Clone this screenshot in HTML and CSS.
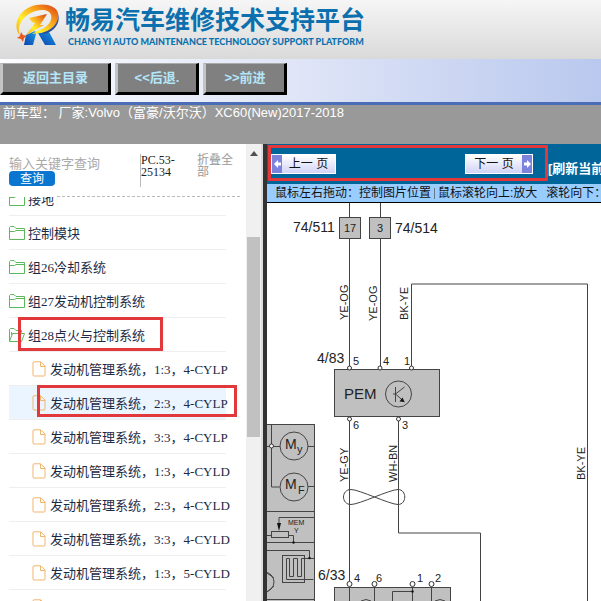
FILE: index.html
```html
<!DOCTYPE html>
<html lang="zh-CN">
<head>
    <meta charset="UTF-8">
    <meta name="viewport" content="width=device-width, initial-scale=1.0">
    <title>畅易汽车维修技术支持平台</title>
    <link rel="stylesheet" href="styles.css">
</head>
<body>
    <svg class="sprite" aria-hidden="true">
        <symbol id="folder" viewBox="0 0 16 14"><path d="M.5 13.500V1.500l1-1H5L7 2.500h8.500v11zM.5 5.500h5l1.500-1h8.500"/></symbol>
        <symbol id="folder-open" viewBox="0 0 16 14"><path d="M.5 13V1.500l1-1H5L7 2.500h5.500v2M.5 13.500l3-8h12l-3 8zM2.500 4v3"/></symbol>
        <symbol id="file" viewBox="0 0 14 16"><path d="M2 .8h6.500L13 5v9q0 1-1 1H2q-1 0-1-1V2Q1 .8 2 .8zM8.500 1v4.500H13"/></symbol>
    </svg>

    <header class="header">
        <svg class="logo" width="46" height="42" viewBox="0 0 46 42" aria-hidden="true">
            <defs>
                <linearGradient id="flame" x1="0" y1="1" x2="1" y2="0">
                    <stop offset="0" stop-color="#f6a318"/>
                    <stop offset="0.35" stop-color="#fff02c"/>
                    <stop offset="0.65" stop-color="#f9a31b"/>
                    <stop offset="1" stop-color="#d93a16"/>
                </linearGradient>
                <linearGradient id="leg" x1="0" y1="1" x2="1" y2="0">
                    <stop offset="0" stop-color="#0a3fae"/>
                    <stop offset="1" stop-color="#1ba0e6"/>
                </linearGradient>
            </defs>
            <path d="M12 31l9-4 1 3-3 11H10z" fill="url(#leg)"/>
            <path d="M24 29l10-3 8 15H31z" fill="url(#leg)"/>
            <path d="M44 10c3 9-4 18-14 20l-3-1c9-4 15-10 17-19z" fill="#2b4f9c"/>
            <path d="M6 32C-2 22 4 8 16 3 28-2 42 1 44 9c2 10-7 18-17 20l-9 1 5-3c9-3 16-9 14-16C35 4 23 5 15 10 6 16 3 24 6 32z" fill="url(#flame)"/>
            <path d="M15 14l18-4-7 11 4 0-18 10 9-12-3-1z" fill="url(#flame)"/>
            <path d="M7 28l2 3 4 1-3 2-1 4-2-3-4-1 3-2z" fill="#ea5a1c"/>
        </svg>
        <div class="brand">
            <h1>畅易汽车维修技术支持平台</h1>
            <p>CHANG YI AUTO MAINTENANCE TECHNOLOGY SUPPORT PLATFORM</p>
        </div>
    </header>

    <nav class="toolbar">
        <button class="tool-btn tool-home" type="button">返回主目录</button>
        <button class="tool-btn" type="button">&lt;&lt;后退.</button>
        <button class="tool-btn" type="button">&gt;&gt;前进</button>
    </nav>

    <div class="car-info">前车型： 厂家:Volvo（富豪/沃尔沃）XC60(New)2017-2018</div>

    <div class="main">
        <aside class="sidebar">
            <div class="side-body">
                <div class="side-top">
                    <form class="search">
                        <input type="text" placeholder="输入关键字查询" aria-label="输入关键字查询">
                        <button type="button">查询</button>
                    </form>
                    <div class="doc-code">PC.53-25134</div>
                    <a class="collapse" href="#">折叠全部</a>
                </div>
                <hr class="divider">
                <div class="tree-view">
                    <ul class="tree">
                        <li><a href="#"><svg class="folder"><use href="#folder"/></svg>接地</a></li>
                        <li><a href="#"><svg class="folder"><use href="#folder"/></svg>控制模块</a></li>
                        <li><a href="#"><svg class="folder"><use href="#folder"/></svg>组26冷却系统</a></li>
                        <li><a href="#"><svg class="folder"><use href="#folder"/></svg>组27发动机控制系统</a></li>
                        <li><a href="#"><svg class="folder"><use href="#folder-open"/></svg>组28点火与控制系统</a><span class="mark mark-group"></span></li>
                        <li class="leaf"><a href="#"><svg class="file"><use href="#file"/></svg>发动机管理系统，1:3，4-CYLP</a></li>
                        <li class="leaf active"><a href="#"><svg class="file"><use href="#file"/></svg>发动机管理系统，2:3，4-CYLP</a><span class="mark mark-item"></span></li>
                        <li class="leaf"><a href="#"><svg class="file"><use href="#file"/></svg>发动机管理系统，3:3，4-CYLP</a></li>
                        <li class="leaf"><a href="#"><svg class="file"><use href="#file"/></svg>发动机管理系统，1:3，4-CYLD</a></li>
                        <li class="leaf"><a href="#"><svg class="file"><use href="#file"/></svg>发动机管理系统，2:3，4-CYLD</a></li>
                        <li class="leaf"><a href="#"><svg class="file"><use href="#file"/></svg>发动机管理系统，3:3，4-CYLD</a></li>
                        <li class="leaf"><a href="#"><svg class="file"><use href="#file"/></svg>发动机管理系统，1:3，5-CYLD</a></li>
                        <li class="leaf"><a href="#"><svg class="file"><use href="#file"/></svg></a></li>
                    </ul>
                </div>
            </div>
            <div class="scrollbar">
                <svg width="8" height="5" viewBox="0 0 8 5"><path d="M0 5l4-5 4 5z" fill="#505050"/></svg>
                <div class="thumb"></div>
            </div>
        </aside>

        <section class="viewer">
            <div class="pager">
                <button class="page-btn page-prev" type="button"><span class="arrow"><svg width="7" height="8" viewBox="0 0 7 8"><path d="M0 4l4-4v2.500h3v3H4V8z" fill="#fff"/></svg></span><span class="page-text">上一 页</span></button>
                <button class="page-btn" type="button"><span class="page-text">下一 页</span><span class="arrow"><svg width="7" height="8" viewBox="0 0 7 8"><path d="M7 4L3 0v2.500H0v3h3V8z" fill="#fff"/></svg></span></button>
                <a class="refresh" href="#">[刷新当前</a>
                <span class="mark mark-pager"></span>
            </div>
            <div class="tips"><span>鼠标左右拖动：控制图片位置</span><i></i><span>鼠标滚轮向上:放大</span><span class="tip-down">滚轮向下：</span></div>

            <!-- wiring diagram -->
            <div class="canvas">
                <svg class="diagram" width="334" height="398" viewBox="267 203 334 398">
                    <g class="fill">
                        <rect x="339.500" y="217.500" width="21" height="21"/>
                        <rect x="369.500" y="217.500" width="21" height="21"/>
                        <rect x="334.500" y="369.500" width="105" height="47"/>
                        <rect x="260.500" y="424.500" width="54" height="180"/>
                        <rect x="334.500" y="587.500" width="116" height="20"/>
                    </g>
                    <g class="wire">
                        <path d="M349.500 203v14M380.500 203v14M349.500 239v128M380.500 239v128M411.500 366v-82h176v320"/>
                        <path d="M349.500 421v160M398.500 421v112h82v70"/>
                        <path d="M351 504.500c-10 0-10-15 0-15 8 0 39 15 47 15 9 0 9-15 0-15-8 0-39 15-47 15z"/>
                        <path d="M267 446.500h13M308 446.500h6M271.500 425v62h8M308 486.500h6"/>
                        <path d="M261 511.500h53M314 517.500h-35v8M267 535.500h4M289 535.500h4.500v7M261 542.500h53M261 550.500h48.500v8"/>
                        <rect x="271.500" y="531.500" width="17" height="6"/>
                        <rect x="282.500" y="555.500" width="22" height="27"/>
                        <path d="M314 558.500h-12.500v18h-4v-18h-4v18h-4v-18h-3v21h27M261 599.500h53"/>
                        <circle cx="294" cy="446" r="14"/>
                        <circle cx="294" cy="487" r="14"/>
                        <circle cx="264" cy="582" r="10"/>
                        <path d="M267 573l7 5M267 592l7-6"/>
                        <circle cx="398.500" cy="394" r="13"/>
                        <path d="M395.500 387v15M395.500 394l9-7M393 394h3M395.500 394l9 8"/>
                        <path d="M349.500 587v14M374.500 587v14M412.500 587v14M431.500 587v14M412 591.500h-19.500V601"/>
                        <path d="M361 601q5-3 10 0M435 601q5-3 10 0"/>
                    </g>
                    <g class="solid">
                        <path d="M277 523h4l-2 8zM404.500 402l-5-.5 3-4z"/>
                        <circle cx="309.500" cy="558" r="1.200"/>
                        <circle cx="293.500" cy="542.500" r="1.200"/>
                        <circle cx="412.500" cy="591.500" r="1.200"/>
                    </g>
                    <g class="pin">
                        <circle cx="349.500" cy="368" r="2"/>
                        <circle cx="380" cy="368" r="2"/>
                        <circle cx="411.500" cy="368" r="2"/>
                        <circle cx="349.500" cy="419" r="2"/>
                        <circle cx="398.500" cy="419" r="2"/>
                        <circle cx="271.500" cy="446" r="2"/>
                        <circle cx="349.500" cy="584" r="2.500"/>
                        <circle cx="374.500" cy="584" r="2.500"/>
                        <circle cx="412.500" cy="584" r="2.500"/>
                        <circle cx="431.500" cy="584" r="2.500"/>
                    </g>
                    <g class="code">
                        <text x="293" y="232">74/511</text>
                        <text x="395" y="233">74/514</text>
                        <text x="317" y="363">4/83</text>
                        <text x="318" y="580">6/33</text>
                        <text x="344" y="399" class="unit">PEM</text>
                        <text x="285" y="449">M</text>
                        <text x="285" y="489">M</text>
                    </g>
                    <g class="num">
                        <text x="297" y="453">y</text>
                        <text x="298" y="494">F</text>
                        <text x="344" y="232">17</text>
                        <text x="377" y="232">3</text>
                        <text x="353" y="365">5</text>
                        <text x="383" y="365">4</text>
                        <text x="404" y="365">1</text>
                        <text x="353" y="429">6</text>
                        <text x="402" y="429">3</text>
                        <text x="354" y="582">4</text>
                        <text x="376" y="582">6</text>
                        <text x="417" y="582">1</text>
                        <text x="435" y="582">2</text>
                    </g>
                    <g class="mem">
                        <text x="288" y="525">MEM</text>
                        <text x="294" y="533">Y</text>
                    </g>
                    <g class="color-code">
                        <text transform="translate(348 320) rotate(-90)">YE-OG</text>
                        <text transform="translate(377 321) rotate(-90)">YE-OG</text>
                        <text transform="translate(408 320) rotate(-90)">BK-YE</text>
                        <text transform="translate(348 482) rotate(-90)">YE-GY</text>
                        <text transform="translate(397 482) rotate(-90)">WH-BN</text>
                        <text transform="translate(585 480) rotate(-90)">BK-YE</text>
                    </g>
                </svg>
            </div>
        </section>
    </div>
</body>
</html>
```

FILE: styles.css
```css
* {
    margin: 0;
    padding: 0;
    box-sizing: border-box;
}

body {
    height: 100vh;
    display: flex;
    flex-direction: column;
    overflow: hidden;
    background: #fff;
    font-family: "Liberation Sans", "Noto Sans CJK SC", sans-serif;
    font-size: 13px;
}

a {
    color: inherit;
    text-decoration: none;
}

button {
    font-family: inherit;
}

.sprite {
    position: absolute;
    width: 0;
    height: 0;
}

.header {
    display: flex;
    flex: none;
    gap: 5px;
    height: 59px;
    padding: 4px 14px 0;
    background: linear-gradient(#f6f6f6, #d9d9d9);
}

.brand {
    color: #0b70ad;
    white-space: nowrap;
}

.brand h1 {
    font-size: 25px;
    line-height: 33px;
}

.brand p {
    padding-left: 3px;
    font-family: Lato, sans-serif;
    font-size: 9px;
    font-weight: 900;
    line-height: 10px;
}

.toolbar {
    display: flex;
    flex: none;
    gap: 4px;
    height: 46px;
    padding: 4px 0 7px;
    background: linear-gradient(90deg, #fdfdff, #dfe5f7 50%, #b9c8ee);
    border-bottom: 3px solid #4b6cb7;
}

.tool-btn {
    width: 84px;
    height: 32px;
    border: 3px solid #000;
    border-top: 1px solid #aaa;
    border-left-color: #c4c4c4;
    background: #808080;
    color: #b4e6fa;
    font-size: 13px;
    font-weight: bold;
    line-height: 24px;
}

.tool-home {
    width: 111px;
}

.car-info {
    flex: none;
    height: 39px;
    padding-left: 3px;
    background: #999;
    color: #fff;
    font-size: 13px;
    line-height: 16px;
    white-space: nowrap;
}

.main {
    display: flex;
    flex: 1;
    min-height: 0;
}

.sidebar {
    display: flex;
    flex: none;
    width: 267px;
    border-right: 4px solid #333;
    box-shadow: inset -2px 0 #ddd;
}

.side-body {
    display: flex;
    flex: 1;
    flex-direction: column;
    min-width: 0;
}

.side-top {
    display: flex;
    height: 52px;
    padding: 10px 6px 0 9px;
    font-size: 12px;
    line-height: 12px;
}

.search {
    width: 131px;
    padding-top: 2px;
}

.search input {
    display: block;
    width: 100%;
    height: 15px;
    border: 0;
    outline: 0;
    background: none;
    font-family: inherit;
    font-size: 13px;
}

.search input::placeholder {
    color: #aaa;
}

.search button {
    display: block;
    width: 46px;
    height: 15px;
    border: 0;
    border-radius: 4px;
    background: #0a76d0;
    color: #fff;
    font-size: 12px;
    line-height: 14px;
}

.doc-code {
    width: 57px;
    height: 33px;
    padding-right: 18px;
    border-left: 1px solid #bbb;
    color: #222;
    font-family: "Liberation Serif", serif;
}

.collapse {
    width: 38px;
    color: #999;
}

.divider {
    flex: none;
    margin: 0 6px 0 57px;
    border: 0;
    border-top: 1px dashed #bbb;
}

.tree-view {
    flex: 1;
    min-height: 0;
    overflow: hidden;
}

/* list is scrolled a little past its first row */
.tree {
    margin: -15px 20px 0 9px;
    list-style: none;
    color: #1c2b45;
    font-family: "Liberation Serif", "Noto Sans CJK SC", serif;
    font-size: 13px;
}

.tree li {
    position: relative;
    height: 34px;
    border-bottom: 1px solid #eee;
}

.tree a {
    display: flex;
    align-items: center;
    gap: 3px;
    height: 33px;
    white-space: nowrap;
}

.tree .leaf a {
    gap: 4px;
    padding-left: 23px;
}

.tree .active {
    background: #ebf5ff;
}

.folder,
.file {
    flex: none;
    fill: none;
}

.folder {
    width: 16px;
    height: 14px;
    stroke: #5cb85c;
}

.file {
    width: 14px;
    height: 16px;
    stroke: #f2b56e;
}

.scrollbar {
    display: flex;
    flex: none;
    flex-direction: column;
    align-items: center;
    width: 15px;
    margin-right: 2px;
    padding-top: 7px;
    background: #f0f0f0;
}

.thumb {
    width: 13px;
    height: 200px;
    margin-top: 81px;
    background: #c1c1c1;
}

/* red highlight frames */
.mark {
    position: absolute;
    border: 3px solid #e2383c;
    pointer-events: none;
}

.mark-group {
    top: -1px;
    left: 9px;
    width: 145px;
    height: 34px;
}

.mark-item {
    top: -1px;
    left: 28px;
    width: 200px;
    height: 32px;
}

.mark-pager {
    top: 1px;
    left: 1px;
    width: 280px;
    height: 36px;
}

.viewer {
    display: flex;
    flex: 1;
    flex-direction: column;
    min-width: 0;
    overflow: hidden;
}

.pager {
    position: relative;
    display: flex;
    flex: none;
    align-items: center;
    height: 40px;
    padding-left: 4px;
    background: #069;
    white-space: nowrap;
}

.page-btn {
    display: flex;
    flex: none;
    width: 68px;
    height: 20px;
    border: 1px solid #fff;
    background: linear-gradient(#fff, #d2d4f6);
    color: #111;
    font-size: 12px;
}

.page-prev {
    width: 65px;
    margin-right: 129px;
}

.page-text {
    flex: 1;
    line-height: 18px;
}

.arrow {
    display: flex;
    align-items: center;
    justify-content: center;
    width: 10px;
    background: #7b83dc;
}

.refresh {
    padding: 7px 0 0 15px;
    color: #fff;
    font-weight: bold;
}

.tips {
    display: flex;
    flex: none;
    align-items: center;
    height: 19px;
    padding-left: 8px;
    border-bottom: 1px solid #000;
    background: #9cf;
    color: #111;
    font-size: 12px;
    line-height: 20px;
    white-space: nowrap;
}

.tips i {
    flex: none;
    width: 1px;
    height: 11px;
    margin: 0 3px;
    background: #678;
}

.tips span {
    flex: none;
}

.tip-down {
    margin-left: 9px;
}

.canvas {
    flex: 1;
    min-height: 0;
    overflow: hidden;
}

.diagram {
    display: block;
    font-family: "Liberation Sans", Arial, sans-serif;
}

.diagram text {
    fill: #222;
}

.fill rect {
    fill: #c0c0c0;
    stroke: #444;
}

.wire {
    fill: none;
    stroke: #444;
}

.solid {
    fill: #111;
}

.pin {
    fill: #fff;
    stroke: #333;
}

.code {
    font-size: 14px;
}

.code .unit {
    font-size: 15px;
}

.num {
    font-size: 11px;
}

.mem {
    font-size: 7px;
}

.color-code {
    font-size: 11px;
}
```
